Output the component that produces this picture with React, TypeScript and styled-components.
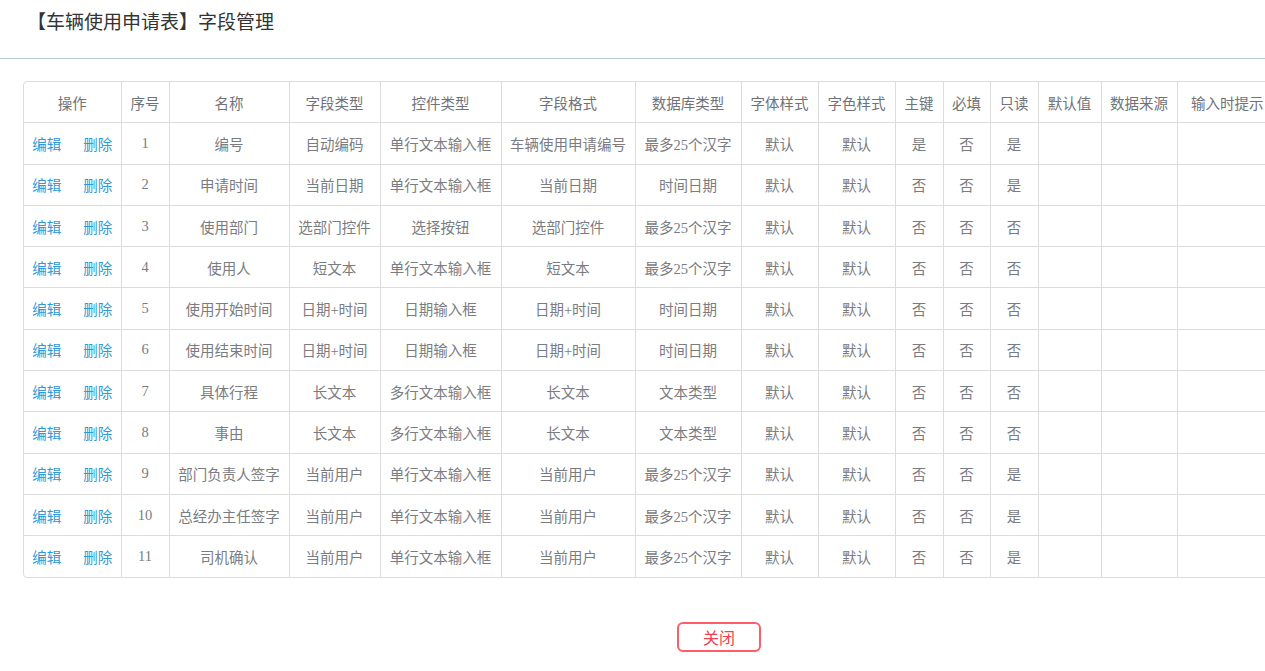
import React from "react";
import styled, { createGlobalStyle } from "styled-components";

const Global = createGlobalStyle`
  html, body { margin: 0; padding: 0; background: #fff; overflow: hidden; }
  body { font-family: "Liberation Serif", "Noto Sans CJK SC", serif; }
`;

const Page = styled.div`
  width: 1265px;
  height: 671px;
  overflow: hidden;
`;

const Header = styled.div`
  height: 59px;
  border-bottom: 1px solid #b9cad8;
  display: flex;
  align-items: flex-start;
  padding: 9px 0 0 27px;
  box-sizing: border-box;
`;

const Title = styled.h1`
  margin: 0;
  font-size: 19px;
  font-weight: normal;
  color: #333;
  line-height: 28px;
  font-family: "Liberation Serif", "Noto Sans CJK SC", serif;
`;

const Body = styled.div`
  padding: 22px 0 0 23px;
`;

const TableWrap = styled.div`
  width: 1253px;
  border: 1px solid #dcdcdc;
  border-radius: 4px;
  overflow: hidden;
`;

const Table = styled.table`
  border-collapse: collapse;
  table-layout: fixed;
  width: 100%;
`;

const Th = styled.th`
  height: 40.3px;
  border-left: 1px solid #dcdcdc;
  border-bottom: 1px solid #dcdcdc;
  font-weight: normal;
  font-size: 14.5px;
  color: #6f7278;
  text-align: center;
  padding: 0;
  white-space: nowrap;
  &:first-child { border-left: none; }
`;

const Td = styled.td`
  height: 40.3px;
  border-left: 1px solid #dcdcdc;
  border-top: 1px solid #dcdcdc;
  font-size: 14.5px;
  color: #7a7c82;
  text-align: center;
  padding: 0;
  white-space: nowrap;
  &:first-child { border-left: none; }
`;

const Actions = styled.div`
  display: flex;
  justify-content: center;
  gap: 22px;
`;

const Link = styled.a`
  color: #2f9ad6;
  text-decoration: none;
  cursor: pointer;
`;

const Footer = styled.div`
  display: flex;
  justify-content: center;
  padding-top: 44px;
  padding-left: 150px;
`;

const CloseButton = styled.button`
  width: 84px;
  height: 30px;
  border: 2px solid #ff5c69;
  border-radius: 6px;
  background: #fff;
  color: #f0404f;
  font-size: 16px;
  font-family: "Noto Sans CJK SC", sans-serif;
  padding: 0;
  line-height: 26px;
`;

const widths = [97, 48, 120, 91, 121, 134, 106, 77, 77, 48, 47, 48, 63, 76, 100];
const headers = ["操作", "序号", "名称", "字段类型", "控件类型", "字段格式", "数据库类型", "字体样式", "字色样式", "主键", "必填", "只读", "默认值", "数据来源", "输入时提示"];

const rows: string[][] = [
  ["编号", "自动编码", "单行文本输入框", "车辆使用申请编号", "最多25个汉字", "是", "否", "是"],
  ["申请时间", "当前日期", "单行文本输入框", "当前日期", "时间日期", "否", "否", "是"],
  ["使用部门", "选部门控件", "选择按钮", "选部门控件", "最多25个汉字", "否", "否", "否"],
  ["使用人", "短文本", "单行文本输入框", "短文本", "最多25个汉字", "否", "否", "否"],
  ["使用开始时间", "日期+时间", "日期输入框", "日期+时间", "时间日期", "否", "否", "否"],
  ["使用结束时间", "日期+时间", "日期输入框", "日期+时间", "时间日期", "否", "否", "否"],
  ["具体行程", "长文本", "多行文本输入框", "长文本", "文本类型", "否", "否", "否"],
  ["事由", "长文本", "多行文本输入框", "长文本", "文本类型", "否", "否", "否"],
  ["部门负责人签字", "当前用户", "单行文本输入框", "当前用户", "最多25个汉字", "否", "否", "是"],
  ["总经办主任签字", "当前用户", "单行文本输入框", "当前用户", "最多25个汉字", "否", "否", "是"],
  ["司机确认", "当前用户", "单行文本输入框", "当前用户", "最多25个汉字", "否", "否", "是"],
];

export default function App() {
  return (
    <Page>
      <Global />
      <Header>
        <Title>【车辆使用申请表】字段管理</Title>
      </Header>
      <Body>
        <TableWrap>
          <Table>
            <colgroup>
              {widths.map((w, i) => (
                <col key={i} style={{ width: w }} />
              ))}
            </colgroup>
            <thead>
              <tr>
                {headers.map((h) => (
                  <Th key={h}>{h}</Th>
                ))}
              </tr>
            </thead>
            <tbody>
              {rows.map((r, i) => (
                <tr key={i}>
                  <Td>
                    <Actions>
                      <Link>编辑</Link>
                      <Link>删除</Link>
                    </Actions>
                  </Td>
                  <Td>{i + 1}</Td>
                  <Td>{r[0]}</Td>
                  <Td>{r[1]}</Td>
                  <Td>{r[2]}</Td>
                  <Td>{r[3]}</Td>
                  <Td>{r[4]}</Td>
                  <Td>默认</Td>
                  <Td>默认</Td>
                  <Td>{r[5]}</Td>
                  <Td>{r[6]}</Td>
                  <Td>{r[7]}</Td>
                  <Td />
                  <Td />
                  <Td />
                </tr>
              ))}
            </tbody>
          </Table>
        </TableWrap>
        <Footer>
          <CloseButton>关闭</CloseButton>
        </Footer>
      </Body>
    </Page>
  );
}
